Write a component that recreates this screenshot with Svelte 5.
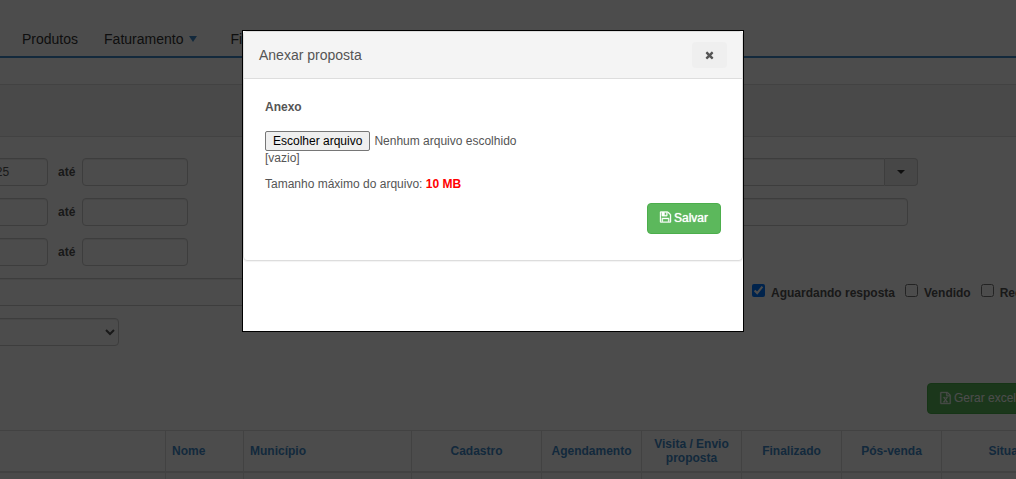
<script>
  const periods = ['01/01/2025', '', ''];
  const statuses = [
    { label: 'Aguardando resposta', checked: true },
    { label: 'Vendido', checked: false },
    { label: 'Recusado', checked: false }
  ];
  const columns = [
    { label: '', width: 166 },
    { label: 'Nome', width: 78, left: true },
    { label: 'Município', width: 168, left: true },
    { label: 'Cadastro', width: 130 },
    { label: 'Agendamento', width: 100 },
    { label: 'Visita / Envio proposta', width: 100 },
    { label: 'Finalizado', width: 100 },
    { label: 'Pós-venda', width: 100 },
    { label: 'Situação', width: 0 }
  ];
  let fileInput;
  let fileName = $state('');
  let open = $state(true);
</script>

<div class="page">
  <nav>
    <a href="#produtos">Produtos</a>
    <a href="#faturamento">Faturamento <i class="drop"></i></a>
    <a href="#financeiro">Financeiro <i class="drop"></i></a>
  </nav>

  <main>
    <header class="strip"></header>
    <form class="filters">
      <div class="periods">
        {#each periods as start, i}
          <div class="range">
            <input type="text" value={start} aria-label="Data inicial" />
            <label for="until{i}">até</label>
            <input id="until{i}" type="text" />
          </div>
        {/each}
        <input class="long" type="text" aria-label="Busca" />
        <select aria-label="Filtro"><option></option></select>
      </div>
      <div class="details">
        <div class="combo">
          <input type="text" aria-label="Município" />
          <button type="button" aria-label="Abrir lista"><i class="caret"></i></button>
        </div>
        <input class="text" type="text" aria-label="Nome" />
        <div class="statuses">
          {#each statuses as s}
            <label><input type="checkbox" checked={s.checked} /><span>{s.label}</span></label>
          {/each}
        </div>
      </div>
    </form>

    <div class="actions">
      <button class="btn" type="button">
        <svg viewBox="0 -1536 1536 1792" width="11" height="12" aria-hidden="true"><path transform="scale(1 -1)" d="M1468 1156q28 -28 48 -76t20 -88v-1152q0 -40 -28 -68t-68 -28h-1344q-40 0 -68 28t-28 68v1600q0 40 28 68t68 28h896q40 0 88 -20t76 -48zM1024 1400v-376h376q-10 29 -22 41l-313 313q-12 12 -41 22zM1408 -128v1024h-416q-40 0 -68 28t-28 68v416h-768v-1536h1280zM429 106v-106h281v106h-75l103 161q5 7 10 16.5t7.5 13.5t3.5 4h2q1 -4 5 -10q2 -4 4.5 -7.5t6 -8t6.5 -8.5l107 -161h-76v-106h291v106h-68l-192 273l195 282h67v107h-279v-107h74l-103 -159q-4 -7 -10 -16.5t-9 -13.5l-2 -3h-2q-1 4 -5 10q-6 11 -17 23l-106 159h76v107h-290v-107h68l189 -272l-194 -283h-68z" /></svg>
        Gerar excel
      </button>
    </div>

    <table>
      <colgroup>
        {#each columns as c}<col style:width={c.width ? `${c.width}px` : 'auto'} />{/each}
      </colgroup>
      <thead>
        <tr>{#each columns as c}<th class:left={c.left}>{c.label}</th>{/each}</tr>
      </thead>
      <tbody>
        <tr>{#each columns as c}<td></td>{/each}</tr>
      </tbody>
    </table>
  </main>
</div>

{#if open}
  <div class="overlay">
    <div class="dialog" role="dialog" aria-modal="true" aria-labelledby="title">
      <section class="panel">
        <header class="heading">
          <span id="title">Anexar proposta</span>
          <button class="close" type="button" aria-label="Fechar" onclick={() => (open = false)}>
            <svg viewBox="0 -1536 1408 1792" width="9" height="12" aria-hidden="true"><path transform="scale(1 -1)" d="M1298 214q0 -40 -28 -68l-136 -136q-28 -28 -68 -28t-68 28l-294 294l-294 -294q-28 -28 -68 -28t-68 28l-136 136q-28 28 -28 68t28 68l294 294l-294 294q-28 28 -28 68t28 68l136 136q28 28 68 28t68 -28l294 -294l294 294q28 28 68 28t68 -28l136 -136q28 -28 28 -68t-28 -68l-294 -294l294 -294q28 -28 28 -68z" /></svg>
          </button>
        </header>
        <div class="body">
          <label class="field" for="file">Anexo</label>
          <div class="file">
            <button type="button" onclick={() => fileInput.click()}>Escolher arquivo</button>
            <span>{fileName || 'Nenhum arquivo escolhido'}</span>
            <input id="file" type="file" hidden bind:this={fileInput} onchange={() => (fileName = fileInput.files[0]?.name ?? '')} />
          </div>
          <div class="empty">[vazio]</div>
          <p>Tamanho máximo do arquivo: <strong>10 MB</strong></p>
          <div class="save">
            <button class="btn strong" type="button">
              <svg viewBox="0 -1344 1536 1536" width="11" height="11" aria-hidden="true"><path transform="scale(1 -1)" d="M384 0h768v384h-768v-384zM1280 0h128v896q0 14 -10 38.5t-20 34.5l-281 281q-10 10 -34 20t-39 10v-416q0 -40 -28 -68t-68 -28h-576q-40 0 -68 28t-28 68v416h-128v-1280h128v416q0 40 28 68t68 28h832q40 0 68 -28t28 -68v-416zM896 928v320q0 13 -9.5 22.5t-22.5 9.5h-192q-13 0 -22.5 -9.5t-9.5 -22.5v-320q0 -13 9.5 -22.5t22.5 -9.5h192q13 0 22.5 9.5t9.5 22.5zM1536 896v-928q0 -40 -28 -68t-68 -28h-1344q-40 0 -68 28t-28 68v1344q0 40 28 68t68 28h928q40 0 88 -20t76 -48l280 -280q28 -28 48 -76t20 -88z" /></svg>
              Salvar
            </button>
          </div>
        </div>
      </section>
    </div>
  </div>
{/if}

<style>
  :global(body) {
    background: #fff;
    color: #555;
    font: 12px/17px "Liberation Sans", Arial, sans-serif;
  }
  * { box-sizing: border-box; }
  button, input, select { font: inherit; color: inherit; }
  svg { fill: currentColor; flex: none; }

  .page { height: 100vh; overflow: hidden; }
  nav {
    display: flex;
    gap: 26px;
    height: 58px;
    padding: 20px 22px 0;
    border-bottom: 2px solid #428bca;
  }
  nav a {
    display: flex;
    align-items: center;
    height: 38px;
    color: #333;
    font-size: 14px;
    text-decoration: none;
  }
  .drop {
    margin: 0 7px 0 6px;
    border: 4px solid transparent;
    border-top: 6px solid #428bca;
    border-bottom: 0;
  }
  main {
    margin-top: 26px;
    border-top: 1px solid #ddd;
  }
  .strip {
    height: 52px;
    background: #f5f5f5;
    border-bottom: 1px solid #ddd;
  }
  .filters {
    display: grid;
    grid-template-columns: 520px 1fr;
    padding-top: 21px;
  }
  .periods, .details { display: flex; flex-direction: column; gap: 12px; }
  .periods { margin-left: -58px; }
  .range { display: flex; align-items: center; }
  .range label { margin: 0 7px 0 10px; }
  label { font-weight: bold; }
  input[type="text"], select {
    width: 106px;
    height: 28px;
    padding: 4px 6px;
    background: #fff;
    border: 1px solid #ccc;
    border-radius: 4px;
    box-shadow: inset 0 1px 1px rgba(0, 0, 0, 0.08);
  }
  select { width: 177px; padding: 4px 0; }
  input.long { width: 440px; }
  input.text { width: 388px; }
  .combo { display: flex; width: 398px; }
  .combo input { flex: 1; border-radius: 4px 0 0 4px; }
  .combo button {
    width: 33px;
    padding: 0;
    display: grid;
    place-items: center;
    background: #eee;
    border: 1px solid #ccc;
    border-left: 0;
    border-radius: 0 4px 4px 0;
  }
  .caret {
    border: 4px solid transparent;
    border-top-color: #333;
    border-bottom: 0;
  }
  .statuses {
    display: flex;
    gap: 10px;
    padding: 46px 0 0 232px;
    white-space: nowrap;
  }
  .statuses label { display: flex; gap: 6px; }
  .statuses input { width: 13px; height: 13px; margin: 0; flex: none; }
  .statuses span { padding-top: 1px; }

  .actions {
    display: flex;
    justify-content: flex-end;
    margin: 37px -13px 16px 0;
  }
  .btn {
    display: flex;
    align-items: center;
    gap: 3px;
    height: 31px;
    padding: 0 12px;
    color: #fff;
    background: #5cb85c;
    border: 1px solid #4cae4c;
    border-radius: 4px;
    white-space: nowrap;
  }
  .btn svg { margin-bottom: 2px; stroke: currentColor; stroke-width: 50; overflow: visible; }
  .btn.strong { text-shadow: 0 0 1px #fff; }
  table {
    width: calc(100% + 70px);
    table-layout: fixed;
    border-collapse: separate;
    border-spacing: 0;
    border-top: 1px solid #ddd;
  }
  th, td { border-right: 1px solid #ddd; }
  th {
    height: 42px;
    padding: 0 6px;
    color: #428bca;
    line-height: 14px;
    border-bottom: 2px solid #ddd;
  }
  th.left { text-align: left; }
  td { height: 30px; background: #f9f9f9; }

  .overlay {
    position: fixed;
    inset: 0;
    display: flex;
    justify-content: center;
    align-items: flex-start;
    padding: 30px 30px 0 0;
    background: rgba(0, 0, 0, 0.7);
  }
  .dialog {
    width: 502px;
    max-width: 100%;
    padding-bottom: 70px;
    background: #fff;
    border: 1px solid #000;
  }
  .panel {
    border: 1px solid #ddd;
    border-radius: 4px;
    box-shadow: 0 1px 1px rgba(0, 0, 0, 0.05);
  }
  .heading {
    display: flex;
    align-items: center;
    justify-content: space-between;
    padding: 10px 15px;
    font-size: 14px;
    background: #f4f4f4;
    border-bottom: 1px solid #ddd;
    border-radius: 3px 3px 0 0;
  }
  .close {
    display: grid;
    place-items: center;
    width: 35px;
    height: 26px;
    padding: 0;
    background: #efefef;
    border: 0;
    border-radius: 4px;
  }
  .body { padding: 20px 21px 26px; }
  .field { display: block; margin-bottom: 15px; }
  .file { display: flex; align-items: center; gap: 4px; height: 20px; }
  .file button {
    height: 20px;
    padding: 0 7px;
    line-height: 18px;
    color: #000;
    background: #efefef;
    border: 1px solid #767676;
    border-radius: 2px;
  }
  .empty { line-height: 15px; }
  p { margin: 10px 0; }
  strong { color: #f00; }
  .save { display: flex; justify-content: flex-end; }
</style>
